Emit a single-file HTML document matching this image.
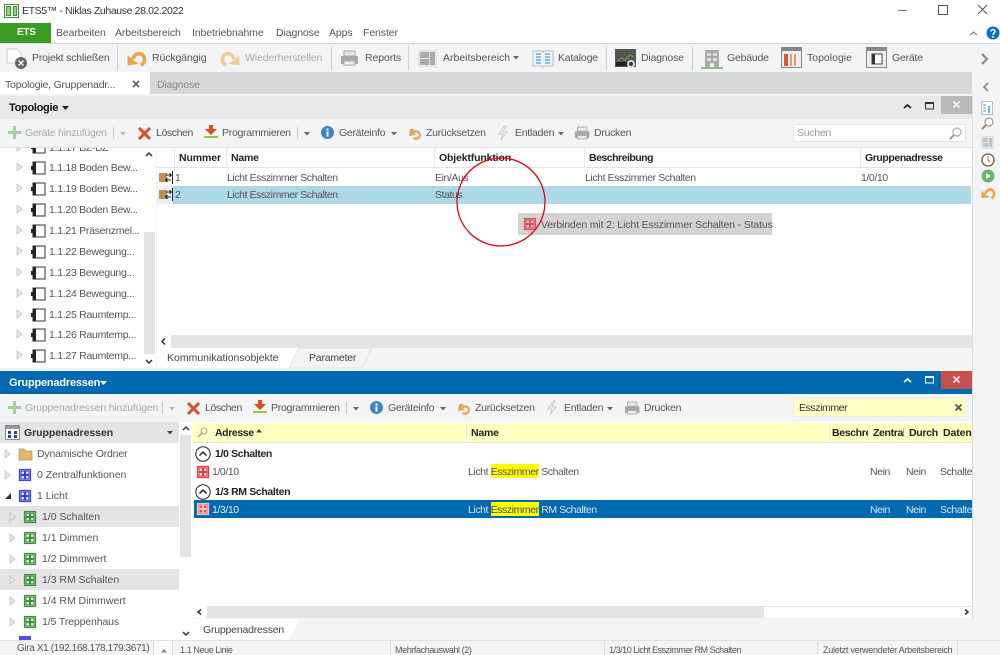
<!DOCTYPE html>
<html><head><meta charset="utf-8"><style>
html,body{margin:0;padding:0;background:#f3f4f6}
#p{position:relative;width:1000px;height:655px;overflow:hidden;background:#f3f4f6;font-family:"Liberation Sans",sans-serif;font-size:10.5px;color:#555;letter-spacing:-.28px}
.r{position:absolute}
.t{position:absolute;white-space:nowrap;line-height:14px;height:14px}
.m{letter-spacing:-.1px}
.n{letter-spacing:-.03px}
.q{letter-spacing:-.42px}
.s{font-size:9px;letter-spacing:-.4px}
.b{font-weight:bold;color:#222;letter-spacing:-.36px}
.g{color:#aaa}
svg{position:absolute;overflow:visible}
</style></head><body><div id="p">
<svg width="0" height="0" style="position:absolute"><defs>
<g id="dev"><rect x="3" y="1" width="12" height="12" fill="#fff" stroke="#444" stroke-width="1.100"/><rect x="3" y="1" width="3" height="12" fill="#222"/><rect x="1" y="5" width="2" height="4" fill="#222"/></g>
<g id="ga"><rect x=".5" y=".5" width="11" height="11" fill="none" stroke="currentColor" stroke-width="1.200"/><rect x="2" y="2" width="3.500" height="3.500" fill="none" stroke="currentColor" stroke-width="1.200"/><rect x="6.500" y="2" width="3.500" height="3.500" fill="none" stroke="currentColor" stroke-width="1.200"/><rect x="2" y="6.500" width="3.500" height="3.500" fill="none" stroke="currentColor" stroke-width="1.200"/><rect x="6.500" y="6.500" width="3.500" height="3.500" fill="none" stroke="currentColor" stroke-width="1.200"/></g>
<g id="tri"><path d="M0 0L5 4L0 8Z" fill="#e8e8e8" stroke="#bbb" stroke-width=".7"/></g>
<g id="co"><rect x="1" y="2" width="8" height="9" fill="#c0904f"/><path d="M8 4h5M11.500 2.200L13.300 4l-1.800 1.800M13 9H8M9.500 7.200L7.700 9l1.800 1.800" fill="none" stroke="#222" stroke-width="1.100"/><path d="M14.500 0v13" stroke="#222" stroke-width="1"/></g>
<g id="undo"><path d="M5 8.500C6 3 13.500 2 14.500 8C15 10.500 13.500 12.500 11.500 13.500" fill="none" stroke="#eda542" stroke-width="3"/><path d="M.5 5.500L9.500 12.500L.5 13.500Z" fill="#eda542"/></g>
<g id="print"><rect x="3" y="0" width="11" height="5" fill="#e6e6e6" stroke="#aaa"/><rect x="0" y="5" width="17" height="8" rx="1" fill="#a8aaa8"/><rect x="3" y="10" width="11" height="4" fill="#eee" stroke="#aaa"/></g>
<g id="x"><path d="M1 1L12 12M12 1L1 12" stroke="#dd4b2b" stroke-width="3"/></g>
<g id="plus"><path d="M6 0h3v5h5v3H9v5H6V8H1V5h5z" fill="#a5d09d"/></g>
<g id="prog"><path d="M5 0h4v4h4l-6 6-6-6h4z" fill="#dd4b2b"/><path d="M0 11h14v2H0z" fill="#9ac93e"/></g>
<g id="info"><circle cx="6.500" cy="6.500" r="6.500" fill="#4084c8"/><rect x="5.500" y="5.500" width="2" height="5" fill="#fff"/><rect x="5.500" y="2.500" width="2" height="2" fill="#fff"/></g>
<g id="flash"><path d="M6 0L1 8h4l-2 6 6-8H5l3-6z" fill="none" stroke="#ccc"/></g>
<g id="reset"><path d="M2 3h5l-2 2c4-2 8 0 8 4s-4 6-8 4l1-2c2 1 5 0 5-2s-3-3-5-2l2 2-7 1z" fill="#e2a65f"/></g>
<g id="caret"><path d="M0 0h6L3 3.500z" fill="#666"/></g>
<g id="up"><circle cx="8" cy="8" r="7.200" fill="#fff" stroke="#222" stroke-width="1"/><path d="M4.500 9.500L8 6l3.500 3.500" fill="none" stroke="#222" stroke-width="1.500"/></g>
</defs></svg>

<!-- title bar -->
<div class="r" style="left:0;top:0;width:1000px;height:43px;background:#fff"></div>
<svg style="left:4px;top:4px" width="16" height="14"><rect x=".5" y=".5" width="14" height="13" fill="#fff" stroke="#3a9b22"/><path d="M2 2h5v10H2zM9 2h4v10H9z" fill="#3a9b22"/><path d="M3 4h3M3 6h3M3 8h3M3 10h3M10 4h2M10 6h2M10 8h2M10 10h2" stroke="#fff"/></svg>
<div class="t" style="left:22px;top:4px;color:#333;font-size:10.5px;letter-spacing:-.38px">ETS5™ - Niklas Zuhause 28.02.2022</div>
<svg style="left:898px;top:5px" width="100" height="12"><path d="M0 5.500h9" stroke="#777"/><rect x="40.500" y=".5" width="9" height="9" fill="none" stroke="#555"/><path d="M80 0l9 9M89 0l-9 9" stroke="#555" fill="none"/></svg>
<div class="r" style="left:0;top:23px;width:51px;height:20px;background:#3b9b22"></div>
<div class="t" style="left:17px;top:26px;color:#fff;font-weight:bold;font-size:10px">ETS</div>
<div class="t m" style="left:56px;top:26px">Bearbeiten</div>
<div class="t m" style="left:115px;top:26px">Arbeitsbereich</div>
<div class="t m" style="left:192px;top:26px">Inbetriebnahme</div>
<div class="t m" style="left:276px;top:26px">Diagnose</div>
<div class="t m" style="left:329px;top:26px">Apps</div>
<div class="t m" style="left:363px;top:26px">Fenster</div>
<svg style="left:969px;top:27px" width="30" height="14"><path d="M1 8l3.500-3L8 8" stroke="#888" fill="none" stroke-width="1.200"/><circle cx="24" cy="6" r="6.500" fill="#0b6fc2"/><path d="M22 4.500c0-2.500 4-2.500 4 0 0 1.500-2 1.500-2 3.500" stroke="#fff" fill="none" stroke-width="1.500"/><rect x="23.200" y="9" width="1.600" height="1.600" fill="#fff"/></svg>

<!-- main toolbar -->
<div class="r" style="left:0;top:43px;width:1000px;height:1px;background:#d4d4d4"></div>
<div class="r" style="left:0;top:72px;width:150px;height:22px;background:#fff"></div>
<div class="r" style="left:150px;top:72px;width:822px;height:22px;background:#d7d8da"></div>
<svg style="left:6px;top:48px" width="22" height="22"><path d="M1 1h10l4 4v10H1z" fill="#fff" stroke="#ccc"/><circle cx="15" cy="15" r="6" fill="#666"/><path d="M12.500 12.500l5 5M17.500 12.500l-5 5" stroke="#fff" stroke-width="1.300"/></svg>
<div class="t m" style="left:32px;top:51px;letter-spacing:-.18px">Projekt schließen</div>
<div class="r" style="left:117px;top:46px;width:1px;height:24px;background:#d0d0d0"></div>
<svg style="left:127px;top:49px" width="20" height="17"><use href="#undo" transform="scale(1.200)"/></svg>
<div class="t m" style="left:152px;top:51px">Rückgängig</div>
<svg style="left:221px;top:49px" width="20" height="17"><g transform="translate(19,0) scale(-1.200,1.200)" opacity=".5"><use href="#undo"/></g></svg>
<div class="t g m" style="left:245px;top:51px">Wiederherstellen</div>
<div class="r" style="left:331px;top:46px;width:1px;height:24px;background:#d0d0d0"></div>
<svg style="left:341px;top:51px" width="20" height="16"><use href="#print"/></svg>
<div class="t m" style="left:365px;top:51px">Reports</div>
<div class="r" style="left:408px;top:46px;width:1px;height:24px;background:#d0d0d0"></div>
<svg style="left:418px;top:50px" width="20" height="17"><rect width="19" height="17" fill="#e4e4e4"/><rect x="2" y="2" width="9" height="6" fill="#aaa"/><rect x="2" y="9" width="9" height="6" fill="#aaa"/><rect x="12" y="2" width="5" height="13" fill="#aaa"/></svg>
<div class="t m" style="left:443px;top:51px;letter-spacing:0">Arbeitsbereich</div>
<svg style="left:513px;top:56px" width="8" height="5"><use href="#caret"/></svg>
<svg style="left:532px;top:49px" width="22" height="19"><path d="M1 2h9l1 1 1-1h9v15h-9l-1 1-1-1H1z" fill="#eef4f8" stroke="#bbb"/><path d="M4 5h5M4 8h5M4 11h5M4 14h5M13 5h5M13 8h5M13 11h5M13 14h5" stroke="#64b4e6" stroke-width="1.500"/></svg>
<div class="t m" style="left:558px;top:51px;letter-spacing:-.2px">Kataloge</div>
<div class="r" style="left:606px;top:46px;width:1px;height:24px;background:#d0d0d0"></div>
<svg style="left:615px;top:49px" width="22" height="20"><rect width="21" height="18" fill="#555"/><path d="M2 12l5-3 3 2 5-5 4 2" stroke="#6fae3d" fill="none"/><rect x="1" y="13" width="12" height="4" fill="#222"/><circle cx="16" cy="15" r="4" fill="#ddd"/><circle cx="16" cy="15" r="2" fill="#333"/></svg>
<div class="t m" style="left:641px;top:51px;letter-spacing:-.2px">Diagnose</div>
<div class="r" style="left:692px;top:46px;width:1px;height:24px;background:#d0d0d0"></div>
<svg style="left:701px;top:48px" width="22" height="22"><path d="M4 2h14v17H4z" fill="#a9a9a9"/><path d="M6 5h4v3H6zM12 5h4v3h-4zM6 10h4v3H6zM12 10h4v3h-4z" fill="#ddd"/><path d="M9 15h4v4H9z" fill="#eee"/><path d="M0 20h22" stroke="#6ab04c" stroke-width="1.500"/></svg>
<div class="t m" style="left:727px;top:51px;letter-spacing:-.2px">Gebäude</div>
<svg style="left:781px;top:47px" width="22" height="22"><rect x=".5" y=".5" width="20" height="20" fill="#eee" stroke="#888"/><rect x="1" y="1" width="19" height="3" fill="#888"/><rect x="3" y="7" width="4" height="12" fill="#e2552b"/><rect x="9" y="7" width="2" height="12" fill="#e69a72"/><rect x="13" y="7" width="2" height="12" fill="#e69a72"/></svg>
<div class="t m" style="left:807px;top:51px;letter-spacing:0">Topologie</div>
<svg style="left:866px;top:47px" width="22" height="22"><rect x=".5" y=".5" width="20" height="20" fill="#eee" stroke="#888"/><rect x="1" y="1" width="19" height="3" fill="#888"/><rect x="6" y="7" width="10" height="10" fill="#fff" stroke="#444"/><rect x="6" y="7" width="3" height="10" fill="#333"/></svg>
<div class="t m" style="left:892px;top:51px;letter-spacing:-.2px">Geräte</div>
<svg style="left:980px;top:53px" width="10" height="12"><path d="M2 1l5 5-5 5" fill="none" stroke="#888" stroke-width="2.200"/></svg>

<!-- tab row -->
<div class="t" style="left:5px;top:78px;letter-spacing:-.2px">Topologie, Gruppenadr...</div>
<svg style="left:132px;top:80px" width="9" height="9"><path d="M1 1l6 6M7 1l-6 6" stroke="#666" stroke-width="1.800"/></svg>
<div class="t" style="left:157px;top:78px;color:#888;letter-spacing:-.2px">Diagnose</div>

<!-- Right rail -->
<svg style="left:982px;top:82px" width="8" height="10"><path d="M6 1L2 5l4 4" fill="none" stroke="#888" stroke-width="1.600"/></svg>
<svg style="left:981px;top:101px" width="14" height="105">
<rect x=".5" y=".5" width="11" height="13" fill="#fff" stroke="#bbb"/><path d="M2 4h3M2 7h3M2 10h3" stroke="#888"/><path d="M8 5v7" stroke="#64b4e6" stroke-width="2"/>
<circle cx="8" cy="21" r="4" fill="#fff" stroke="#999" stroke-width="1.200"/><path d="M5 24l-4 4" stroke="#b08050" stroke-width="2"/>
<rect x="0" y="35" width="13" height="13" fill="#e2e2e2"/><path d="M2 37h5v4H2zM2 42h5v4H2zM8 37h3v9H8z" fill="#c4c4c4"/>
<circle cx="7" cy="59" r="6" fill="#fff" stroke="#8a6d4d" stroke-width="1.500"/><path d="M7 55v4l2 2" stroke="#8a6d4d" fill="none"/>
<circle cx="7" cy="75" r="6.500" fill="#6cb66c"/><path d="M5 72l5 3-5 3z" fill="#fff"/>
<g transform="translate(0,85)"><use href="#undo" transform="scale(.9)"/></g></svg>

<!-- Topologie panel -->
<div class="r" style="left:0;top:96px;width:972px;height:23px;background:#e8e8e8"></div>
<div class="t b" style="left:9px;top:101px;font-size:11px;color:#111;letter-spacing:-.3px">Topologie</div>
<svg style="left:62px;top:106px" width="8" height="5"><path d="M0 0h7L3.500 4z" fill="#222"/></svg>
<svg style="left:903px;top:102px" width="65" height="12"><path d="M1 6l3.500-3L8 6" stroke="#222" fill="none" stroke-width="1.800"/></svg>
<svg style="left:925px;top:102px" width="10" height="10"><rect x=".5" y="1" width="8" height="6" fill="none" stroke="#333"/><rect x="0" y="0" width="9" height="2" fill="#333"/></svg>
<div class="r" style="left:941px;top:96px;width:31px;height:18px;background:#b8b9bb"></div>
<svg style="left:953px;top:101px" width="8" height="8"><path d="M.5.5l6 6M6.500.5l-6 6" stroke="#fff" stroke-width="1.500"/></svg>

<svg style="left:7px;top:126px" width="14" height="14"><use href="#plus"/></svg>
<div class="t g" style="left:25px;top:126px">Geräte hinzufügen</div>
<div class="r" style="left:113px;top:127px;width:1px;height:12px;background:#ccc"></div>
<svg style="left:120px;top:132px" width="6" height="4"><path d="M0 0h6L3 3.500z" fill="#bbb"/></svg>
<svg style="left:138px;top:127px" width="13" height="13"><use href="#x"/></svg>
<div class="t" style="left:156px;top:126px;letter-spacing:-.4px">Löschen</div>
<svg style="left:204px;top:125px" width="14" height="14"><use href="#prog"/></svg>
<div class="t" style="left:222px;top:126px">Programmieren</div>
<div class="r" style="left:297px;top:127px;width:1px;height:12px;background:#ccc"></div>
<svg style="left:304px;top:132px" width="6" height="4"><use href="#caret"/></svg>
<svg style="left:321px;top:126px" width="13" height="13"><use href="#info"/></svg>
<div class="t" style="left:339px;top:126px">Geräteinfo</div>
<svg style="left:391px;top:132px" width="6" height="4"><use href="#caret"/></svg>
<svg style="left:408px;top:126px" width="15" height="14"><use href="#reset"/></svg>
<div class="t" style="left:426px;top:126px">Zurücksetzen</div>
<svg style="left:498px;top:126px" width="10" height="14"><use href="#flash"/></svg>
<div class="t" style="left:515px;top:126px">Entladen</div>
<svg style="left:558px;top:132px" width="6" height="4"><use href="#caret"/></svg>
<svg style="left:575px;top:127px" width="17" height="14"><g transform="scale(.85)"><use href="#print"/></g></svg>
<div class="t" style="left:594px;top:126px">Drucken</div>
<div class="r" style="left:793px;top:124px;width:173px;height:18px;background:#fff;box-sizing:border-box;border:1px solid #e4e4e4"></div>
<div class="t" style="left:797px;top:126px;color:#999">Suchen</div>
<svg style="left:949px;top:127px" width="13" height="13"><circle cx="8" cy="5" r="4" fill="#fff" stroke="#aaa" stroke-width="1.200"/><path d="M5 8l-4 4" stroke="#999" stroke-width="2"/></svg>

<!-- tree top -->
<div class="r" style="left:0;top:147px;width:972px;height:1px;background:#e0e0e0"></div>
<div class="r" style="left:0;top:148px;width:143px;height:220px;background:#fff"></div>
<div class="r" style="left:143px;top:148px;width:13px;height:220px;background:#fff"></div>
<div class="r" style="left:144px;top:232px;width:11px;height:122px;background:#e4e4e4"></div>
<svg style="left:145px;top:151px" width="8" height="214"><path d="M1 5l3-3 3 3" stroke="#333" fill="none" stroke-width="1.500"/><path d="M1 209l3 3 3-3" stroke="#333" fill="none" stroke-width="1.500"/></svg>
<div style="position:absolute;left:0;top:148px;width:143px;height:220px;overflow:hidden">
<svg style="left:17px;top:-5px" width="6" height="9"><use href="#tri"/></svg><svg style="left:30px;top:-8px" width="16" height="14"><use href="#dev"/></svg><div class="t" style="left:49px;top:-7px">1.1.17 BZ-BZ</div>
<svg style="left:17px;top:15px" width="6" height="9"><use href="#tri"/></svg><svg style="left:30px;top:13px" width="16" height="14"><use href="#dev"/></svg><div class="t" style="left:49px;top:13px">1.1.18 Boden Bew...</div>
<svg style="left:17px;top:36px" width="6" height="9"><use href="#tri"/></svg><svg style="left:30px;top:34px" width="16" height="14"><use href="#dev"/></svg><div class="t" style="left:49px;top:34px">1.1.19 Boden Bew...</div>
<svg style="left:17px;top:57px" width="6" height="9"><use href="#tri"/></svg><svg style="left:30px;top:55px" width="16" height="14"><use href="#dev"/></svg><div class="t" style="left:49px;top:55px">1.1.20 Boden Bew...</div>
<svg style="left:17px;top:78px" width="6" height="9"><use href="#tri"/></svg><svg style="left:30px;top:76px" width="16" height="14"><use href="#dev"/></svg><div class="t" style="left:49px;top:76px">1.1.21 Präsenzmel...</div>
<svg style="left:17px;top:99px" width="6" height="9"><use href="#tri"/></svg><svg style="left:30px;top:97px" width="16" height="14"><use href="#dev"/></svg><div class="t" style="left:49px;top:97px">1.1.22 Bewegung...</div>
<svg style="left:17px;top:120px" width="6" height="9"><use href="#tri"/></svg><svg style="left:30px;top:118px" width="16" height="14"><use href="#dev"/></svg><div class="t" style="left:49px;top:118px">1.1.23 Bewegung...</div>
<svg style="left:17px;top:141px" width="6" height="9"><use href="#tri"/></svg><svg style="left:30px;top:139px" width="16" height="14"><use href="#dev"/></svg><div class="t" style="left:49px;top:139px">1.1.24 Bewegung...</div>
<svg style="left:17px;top:162px" width="6" height="9"><use href="#tri"/></svg><svg style="left:30px;top:160px" width="16" height="14"><use href="#dev"/></svg><div class="t" style="left:49px;top:160px">1.1.25 Raumtemp...</div>
<svg style="left:17px;top:182px" width="6" height="9"><use href="#tri"/></svg><svg style="left:30px;top:180px" width="16" height="14"><use href="#dev"/></svg><div class="t" style="left:49px;top:180px">1.1.26 Raumtemp...</div>
<svg style="left:17px;top:203px" width="6" height="9"><use href="#tri"/></svg><svg style="left:30px;top:201px" width="16" height="14"><use href="#dev"/></svg><div class="t" style="left:49px;top:201px">1.1.27 Raumtemp...</div>
</div>

<!-- top grid -->
<div class="r" style="left:157px;top:148px;width:815px;height:187px;background:#fff"></div>
<div class="r" style="left:157px;top:167px;width:815px;height:1px;background:#e4e4e4"></div>
<div class="r" style="left:174px;top:148px;width:1px;height:19px;background:#e8e8e8"></div>
<div class="r" style="left:226px;top:148px;width:1px;height:19px;background:#e8e8e8"></div>
<div class="r" style="left:434px;top:148px;width:1px;height:19px;background:#e8e8e8"></div>
<div class="r" style="left:584px;top:148px;width:1px;height:19px;background:#e8e8e8"></div>
<div class="r" style="left:860px;top:148px;width:1px;height:19px;background:#e8e8e8"></div>
<div class="t b" style="left:179px;top:151px;letter-spacing:-.1px">Nummer</div>
<div class="t b" style="left:231px;top:151px;letter-spacing:-.2px">Name</div>
<div class="t b" style="left:439px;top:151px;letter-spacing:-.15px">Objektfunktion</div>
<div class="t b" style="left:589px;top:151px;letter-spacing:-.5px">Beschreibung</div>
<div class="t b" style="left:865px;top:151px;letter-spacing:-.42px">Gruppenadresse</div>
<div class="r" style="left:157px;top:186px;width:814px;height:18px;background:#add8e6"></div>
<div class="r" style="left:157px;top:186px;width:16px;height:18px;background:#e8f2f6"></div>
<svg style="left:158px;top:171px" width="18" height="15"><use href="#co"/></svg>
<svg style="left:158px;top:188px" width="18" height="15"><use href="#co"/></svg>
<div class="t" style="left:175px;top:171px">1</div>
<div class="t" style="left:175px;top:188px">2</div>
<div class="t q" style="left:227px;top:171px">Licht Esszimmer Schalten</div>
<div class="t q" style="left:227px;top:188px">Licht Esszimmer Schalten</div>
<div class="t q" style="left:435px;top:171px">Ein/Aus</div>
<div class="t q" style="left:435px;top:188px">Status</div>
<div class="t q" style="left:585px;top:171px">Licht Esszimmer Schalten</div>
<div class="t q" style="left:861px;top:171px">1/0/10</div>
<div class="r" style="left:518px;top:213px;width:254px;height:22px;background:#d3d3d3"></div>
<svg style="left:524px;top:218px;color:#e0555a" width="13" height="13"><use href="#ga"/></svg>
<div class="t" style="left:541px;top:218px;letter-spacing:-.14px">Verbinden mit 2: Licht Esszimmer Schalten - Status</div>
<svg style="left:450px;top:155px" width="100" height="100"><circle cx="51" cy="47" r="44" fill="none" stroke="#e8000a" stroke-width="1.300"/></svg>

<!-- top scroll & tabs -->
<div class="r" style="left:157px;top:335px;width:815px;height:13px;background:#e4e4e4"></div>
<div class="r" style="left:157px;top:335px;width:14px;height:13px;background:#fff"></div>
<svg style="left:161px;top:338px" width="6" height="7"><path d="M4 .5L1 3.500l3 3" stroke="#333" fill="none" stroke-width="1.500"/></svg>
<div class="r" style="left:157px;top:348px;width:815px;height:21px;background:#f3f4f6"></div>
<svg style="left:157px;top:348px" width="220" height="21"><path d="M0 0V20H132L142 0Z" fill="#fff"/><path d="M142 0H215L205 20H132Z" fill="#f3f4f6" stroke="#dedede" stroke-width=".8"/></svg>
<div class="t" style="left:167px;top:351px;color:#444;letter-spacing:0">Kommunikationsobjekte</div>
<div class="t" style="left:309px;top:351px;color:#444;letter-spacing:-.2px">Parameter</div>

<!-- Gruppenadressen panel -->
<div class="r" style="left:0;top:371px;width:972px;height:23px;background:#0069b1"></div>
<div class="t" style="left:9px;top:376px;color:#fff;font-weight:bold;font-size:11px;letter-spacing:-.2px">Gruppenadressen</div>
<svg style="left:100px;top:381px" width="8" height="5"><path d="M0 0h7L3.500 4z" fill="#fff"/></svg>
<svg style="left:904px;top:377px" width="10" height="8"><path d="M0 5l3.500-3L7 5" stroke="#fff" fill="none" stroke-width="1.800"/></svg>
<svg style="left:925px;top:376px" width="10" height="10"><rect x=".5" y="1" width="8" height="6" fill="none" stroke="#fff"/><rect x="0" y="0" width="9" height="2" fill="#fff"/></svg>
<div class="r" style="left:941px;top:371px;width:31px;height:18px;background:#c7504f"></div>
<svg style="left:953px;top:376px" width="8" height="8"><path d="M.5.5l6 6M6.500.5l-6 6" stroke="#fff" stroke-width="1.500"/></svg>

<svg style="left:7px;top:401px" width="14" height="14"><use href="#plus"/></svg>
<div class="t g" style="left:25px;top:401px;letter-spacing:-.2px">Gruppenadressen hinzufügen</div>
<div class="r" style="left:162px;top:402px;width:1px;height:12px;background:#ccc"></div>
<svg style="left:169px;top:407px" width="6" height="4"><path d="M0 0h6L3 3.500z" fill="#bbb"/></svg>
<svg style="left:187px;top:402px" width="13" height="13"><use href="#x"/></svg>
<div class="t" style="left:205px;top:401px;letter-spacing:-.4px">Löschen</div>
<svg style="left:253px;top:400px" width="14" height="14"><use href="#prog"/></svg>
<div class="t" style="left:271px;top:401px">Programmieren</div>
<div class="r" style="left:346px;top:402px;width:1px;height:12px;background:#ccc"></div>
<svg style="left:353px;top:407px" width="6" height="4"><use href="#caret"/></svg>
<svg style="left:370px;top:401px" width="13" height="13"><use href="#info"/></svg>
<div class="t" style="left:388px;top:401px">Geräteinfo</div>
<svg style="left:440px;top:407px" width="6" height="4"><use href="#caret"/></svg>
<svg style="left:457px;top:401px" width="15" height="14"><use href="#reset"/></svg>
<div class="t" style="left:475px;top:401px">Zurücksetzen</div>
<svg style="left:547px;top:401px" width="10" height="14"><use href="#flash"/></svg>
<div class="t" style="left:564px;top:401px">Entladen</div>
<svg style="left:607px;top:407px" width="6" height="4"><use href="#caret"/></svg>
<svg style="left:625px;top:402px" width="17" height="14"><g transform="scale(.85)"><use href="#print"/></g></svg>
<div class="t" style="left:644px;top:401px">Drucken</div>
<div class="r" style="left:793px;top:398px;width:173px;height:19px;background:#ffffc4;box-sizing:border-box;border:1px solid #f0f0e0"></div>
<div class="t q" style="left:799px;top:401px;color:#333">Esszimmer</div>
<svg style="left:955px;top:404px" width="8" height="8"><path d="M.5.5l6 6M6.500.5l-6 6" stroke="#555" stroke-width="1.800"/></svg>

<!-- GA tree -->
<div class="r" style="left:0;top:422px;width:179px;height:218px;background:#fff"></div>
<div class="r" style="left:0;top:422px;width:179px;height:21px;background:#e4e4e4"></div>
<svg style="left:5px;top:425px" width="15" height="15"><rect x=".5" y=".5" width="14" height="14" fill="#fff" stroke="#888"/><rect x="1" y="1" width="13" height="3" fill="#999"/><path d="M3 6h3v3H3zM9 6h3v3H9zM3 10h3v3H3zM9 10h3v3H9z" fill="#2a3ecb"/></svg>
<div class="t" style="left:24px;top:426px;color:#333;font-weight:bold;letter-spacing:-.05px">Gruppenadressen</div>
<svg style="left:167px;top:431px" width="6" height="4"><path d="M0 0h6L3 3.500z" fill="#444"/></svg>
<div class="r" style="left:0;top:506px;width:179px;height:21px;background:#e4e4e4"></div>
<div class="r" style="left:0;top:569px;width:179px;height:21px;background:#e4e4e4"></div>

<svg style="left:5px;top:450px" width="6" height="9"><use href="#tri"/></svg>
<svg style="left:18px;top:447px" width="15" height="14"><path d="M1 2h5l2 2h6v9H1z" fill="#e8b467" stroke="#999" stroke-width=".7"/></svg>
<div class="t n" style="left:37px;top:447px;letter-spacing:-.18px">Dynamische Ordner</div>
<svg style="left:5px;top:471px" width="6" height="9"><use href="#tri"/></svg>
<svg style="left:19px;top:469px;color:#3a3ee0" width="12" height="12"><use href="#ga"/></svg>
<div class="t n" style="left:37px;top:468px">0 Zentralfunktionen</div>
<svg style="left:5px;top:493px" width="6" height="6"><path d="M6 0v6H0z" fill="#333"/></svg>
<svg style="left:19px;top:490px;color:#3a3ee0" width="12" height="12"><use href="#ga"/></svg>
<div class="t n" style="left:37px;top:489px">1 Licht</div>

<svg style="left:10px;top:513px" width="6" height="9"><use href="#tri"/></svg>
<svg style="left:24px;top:511px;color:#3a933a" width="12" height="12"><use href="#ga"/></svg>
<div class="t n" style="left:42px;top:510px">1/0 Schalten</div>
<svg style="left:10px;top:534px" width="6" height="9"><use href="#tri"/></svg>
<svg style="left:24px;top:532px;color:#3a933a" width="12" height="12"><use href="#ga"/></svg>
<div class="t n" style="left:42px;top:531px">1/1 Dimmen</div>
<svg style="left:10px;top:555px" width="6" height="9"><use href="#tri"/></svg>
<svg style="left:24px;top:553px;color:#3a933a" width="12" height="12"><use href="#ga"/></svg>
<div class="t n" style="left:42px;top:552px">1/2 Dimmwert</div>
<svg style="left:10px;top:576px" width="6" height="9"><use href="#tri"/></svg>
<svg style="left:24px;top:574px;color:#3a933a" width="12" height="12"><use href="#ga"/></svg>
<div class="t n" style="left:42px;top:573px">1/3 RM Schalten</div>
<svg style="left:10px;top:597px" width="6" height="9"><use href="#tri"/></svg>
<svg style="left:24px;top:595px;color:#3a933a" width="12" height="12"><use href="#ga"/></svg>
<div class="t n" style="left:42px;top:594px">1/4 RM Dimmwert</div>
<svg style="left:10px;top:618px" width="6" height="9"><use href="#tri"/></svg>
<svg style="left:24px;top:616px;color:#3a933a" width="12" height="12"><use href="#ga"/></svg>
<div class="t n" style="left:42px;top:615px;letter-spacing:-.12px">1/5 Treppenhaus</div>
<div class="r" style="left:19px;top:636px;width:12px;height:4px;background:#5050e0"></div>

<div class="r" style="left:179px;top:422px;width:14px;height:218px;background:#fff"></div>
<div class="r" style="left:180px;top:435px;width:11px;height:122px;background:#e4e4e4"></div>
<svg style="left:182px;top:425px" width="8" height="214"><path d="M1 5l3-3 3 3" stroke="#333" fill="none" stroke-width="1.500"/><path d="M1 207l3 3 3-3" stroke="#333" fill="none" stroke-width="1.500"/></svg>

<!-- GA grid -->
<div class="r" style="left:193px;top:422px;width:779px;height:184px;background:#fff"></div>
<div class="r" style="left:193px;top:423px;width:779px;height:19px;background:#ffffc0"></div>
<div class="r" style="left:193px;top:442px;width:779px;height:1px;background:#e4e4e4"></div>
<div class="r" style="left:209px;top:423px;width:1px;height:19px;background:#f3f3e0"></div>
<div class="r" style="left:466px;top:423px;width:1px;height:19px;background:#e8e8d8"></div>
<div class="r" style="left:829px;top:423px;width:2px;height:19px;background:#f3f3e0"></div>
<div class="r" style="left:868px;top:423px;width:2px;height:19px;background:#f3f3e0"></div>
<div class="r" style="left:904px;top:423px;width:2px;height:19px;background:#f3f3e0"></div>
<div class="r" style="left:936px;top:423px;width:2px;height:19px;background:#f3f3e0"></div>
<svg style="left:197px;top:427px" width="11" height="11"><circle cx="7" cy="4" r="3" fill="none" stroke="#aaa"/><path d="M5 6l-4 4" stroke="#b0a080" stroke-width="1.500"/></svg>
<div class="t b" style="left:215px;top:426px;letter-spacing:-.4px">Adresse</div>
<svg style="left:256px;top:429px" width="6" height="4"><path d="M0 3.500h6L3 0z" fill="#444"/></svg>
<div class="t b" style="left:471px;top:426px;letter-spacing:-.2px">Name</div>
<div style="position:absolute;left:832px;top:426px;width:36px;height:14px;overflow:hidden"><div class="t b" style="left:0;top:0">Beschreibung</div></div>
<div style="position:absolute;left:873px;top:426px;width:31px;height:14px;overflow:hidden"><div class="t b" style="left:0;top:0">Zentral</div></div>
<div class="t b" style="left:909px;top:426px;letter-spacing:-.3px">Durch</div>
<div style="position:absolute;left:943px;top:426px;width:29px;height:14px;overflow:hidden"><div class="t b" style="left:0;top:0;letter-spacing:-.1px">Daten</div></div>

<svg style="left:195px;top:446px" width="16" height="16"><use href="#up"/></svg>
<div class="t b" style="left:215px;top:447px">1/0 Schalten</div>
<svg style="left:197px;top:466px;color:#e03a3a" width="12" height="12"><use href="#ga"/></svg>
<div class="t q" style="left:212px;top:465px">1/0/10</div>
<div class="r" style="left:491px;top:464px;width:48px;height:14px;background:#ff0"></div>
<div class="t q" style="left:468px;top:465px">Licht Esszimmer Schalten</div>
<div class="t q" style="left:870px;top:465px">Nein</div>
<div class="t q" style="left:906px;top:465px">Nein</div>
<div style="position:absolute;left:940px;top:465px;width:32px;height:14px;overflow:hidden"><div class="t q" style="left:0;top:0">Schalten</div></div>

<svg style="left:195px;top:484px" width="16" height="16"><use href="#up"/></svg>
<div class="t b" style="left:215px;top:485px">1/3 RM Schalten</div>
<div class="r" style="left:194px;top:500px;width:778px;height:18px;background:#0069b1"></div>
<svg style="left:197px;top:503px;color:#f4c0c0" width="12" height="12"><rect width="12" height="12" fill="#e04040"/><use href="#ga"/></svg>
<div class="t q" style="left:212px;top:503px;color:#e8f0f8">1/3/10</div>
<div class="r" style="left:491px;top:502px;width:48px;height:14px;background:#ff0"></div>
<div class="t q" style="left:468px;top:503px;color:#d8e8f4">Licht <span style="color:#444">Esszimmer</span> RM Schalten</div>
<div class="t q" style="left:870px;top:503px;color:#d8e8f4">Nein</div>
<div class="t q" style="left:906px;top:503px;color:#d8e8f4">Nein</div>
<div style="position:absolute;left:940px;top:503px;width:32px;height:14px;overflow:hidden"><div class="t q" style="left:0;top:0;color:#d8e8f4">Schalten</div></div>

<div class="r" style="left:193px;top:606px;width:779px;height:12px;background:#e4e4e4"></div>
<div class="r" style="left:193px;top:606px;width:14px;height:12px;background:#fff"></div>
<div class="r" style="left:764px;top:607px;width:208px;height:11px;background:#fff"></div>
<svg style="left:197px;top:609px" width="6" height="7"><path d="M4 .5L1 3l3 2.500" stroke="#333" fill="none" stroke-width="1.500"/></svg>
<svg style="left:964px;top:609px" width="6" height="7"><path d="M1 .5L4 3 1 5.500" stroke="#333" fill="none" stroke-width="1.500"/></svg>
<div class="r" style="left:972px;top:96px;width:1px;height:523px;background:#dcdcdc"></div>
<svg style="left:193px;top:619px" width="110" height="21"><path d="M0 0V21H96L107 0Z" fill="#fff"/></svg>
<div class="t" style="left:203px;top:623px;color:#444;letter-spacing:-.2px">Gruppenadressen</div>

<!-- status bar -->
<div class="r" style="left:0;top:640px;width:1000px;height:1px;background:#e0e0e0"></div>
<div class="t" style="left:17px;top:642px;font-size:10px;letter-spacing:-.37px">Gira X1 (192.168.178.179:3671)</div>
<div class="r" style="left:153px;top:641px;width:18px;height:14px;background:#fbfbfb;border-left:1px solid #ddd;border-right:1px solid #ddd"></div>
<svg style="left:161px;top:649px" width="6" height="4"><path d="M0 3.500h6L3 0z" fill="#888"/></svg>
<div class="t s" style="left:180px;top:643px">1.1 Neue Linie</div>
<div class="r" style="left:390px;top:641px;width:1px;height:14px;background:#ddd"></div>
<div class="t s" style="left:395px;top:643px">Mehrfachauswahl (2)</div>
<div class="r" style="left:604px;top:641px;width:1px;height:14px;background:#ddd"></div>
<div class="t s" style="left:609px;top:643px;letter-spacing:-.46px">1/3/10 Licht Esszimmer RM Schalten</div>
<div class="r" style="left:817px;top:641px;width:1px;height:14px;background:#ddd"></div>
<div class="t s" style="left:823px;top:643px;letter-spacing:-.27px">Zuletzt verwendeter Arbeitsbereich</div>
<div class="r" style="left:957px;top:641px;width:1px;height:14px;background:#ddd"></div>
</div></body></html>
